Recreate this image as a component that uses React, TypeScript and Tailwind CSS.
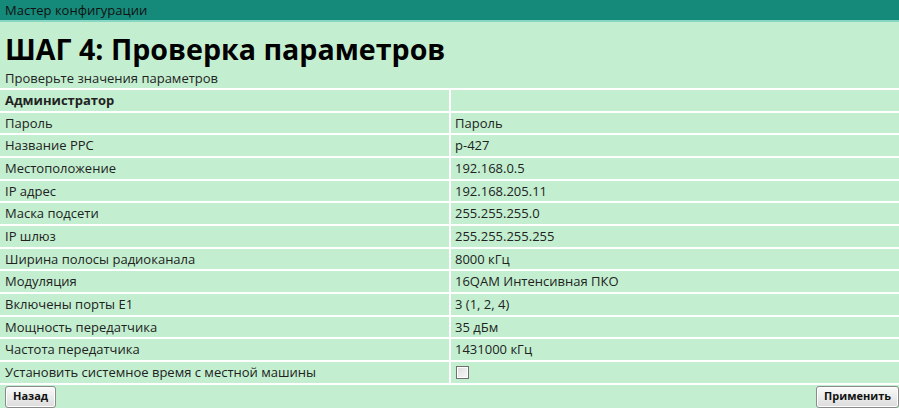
const rows: [string, React.ReactNode][] = [
  ["Пароль", "Пароль"],
  ["Название РРС", "р-427"],
  ["Местоположение", "192.168.0.5"],
  ["IP адрес", "192.168.205.11"],
  ["Маска подсети", "255.255.255.0"],
  ["IP шлюз", "255.255.255.255"],
  ["Ширина полосы радиоканала", "8000 кГц"],
  ["Модуляция", "16QAM Интенсивная ПКО"],
  ["Включены порты E1", "3 (1, 2, 4)"],
  ["Мощность передатчика", "35 дБм"],
  ["Частота передатчика", "1431000 кГц"],
];

function Row({ label, value, bold }: { label: string; value: React.ReactNode; bold?: boolean }) {
  return (
    <div className="flex h-[22.67px] border-t-2 border-white">
      <div className={"w-[449px] pl-[5px] flex items-center pt-[1px] " + (bold ? "font-bold" : "")}>{label}</div>
      <div className="flex-1 border-l-2 border-white pl-[4px] flex items-center pt-[1px]">{value}</div>
    </div>
  );
}

function Button({ children }: { children: React.ReactNode }) {
  return (
    <button className="h-[22px] px-[7px] rounded-[3px] border border-[#8a8a8a] bg-gradient-to-b from-[#fafafa] to-[#dcdcdc] text-[11px] font-bold text-[#111] shadow-[inset_0_0_0_1px_#fff]">
      {children}
    </button>
  );
}

export default function App() {
  return (
    <div className="w-[899px] h-[408px] bg-[#c3efd0] text-[13px] text-[#222] overflow-hidden" style={{ fontFamily: '"Open Sans", "Noto Sans", sans-serif' }}>
      <div className="h-[20px] bg-[#158a7a] pl-[5px] leading-[20px] text-[#111]">Мастер конфигурации</div>
      <div className="h-[2px] bg-[#86d6c2]" />
      <h1 className="pl-[5px] pt-[9px] h-[46px] text-[28.6px] leading-[36px] font-bold text-black">ШАГ 4: Проверка параметров</h1>
      <div className="pl-[5px] h-[20px] leading-[20px]">Проверьте значения параметров</div>
      <div className="border-b-2 border-white">
        <Row label="Администратор" value="" bold />
        {rows.map(([l, v]) => (
          <Row key={l} label={l} value={v} />
        ))}
        <Row
          label="Установить системное время с местной машины"
          value={<span className="w-[13px] h-[13px] border border-[#707070] bg-gradient-to-br from-[#dcdcdc] to-[#fafafa] shadow-[inset_0_0_0_1px_#fff] ml-[1px]" />}
        />
      </div>
      <div className="flex justify-between pl-[5px] pr-[0px] pt-[1px]">
        <Button>Назад</Button>
        <Button>Применить</Button>
      </div>
    </div>
  );
}
